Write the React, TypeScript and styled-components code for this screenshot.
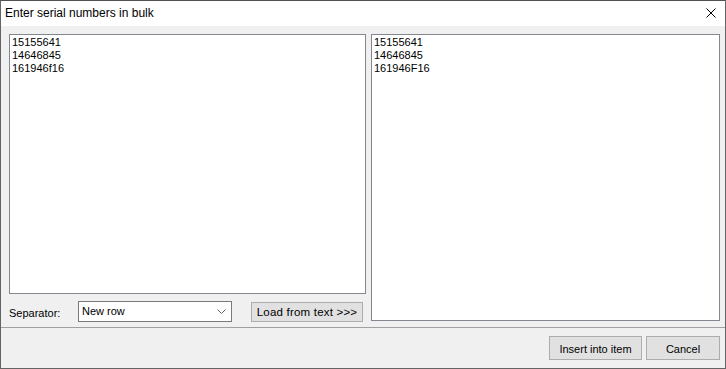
import styled, { createGlobalStyle } from "styled-components";

const GlobalStyle = createGlobalStyle`
  html, body {
    margin: 0;
    padding: 0;
    background: #ffffff;
  }
  body {
    font-family: "Liberation Sans", Arial, sans-serif;
    font-size: 11px;
    color: #000;
  }
`;

const leftSerials = "15155641\n14646845\n161946f16";
const rightSerials = "15155641\n14646845\n161946F16";

const App = () => {
  return (
    <>
      <GlobalStyle />
      <Window>
        <TitleBar>
          <Title>Enter serial numbers in bulk</Title>
          <CloseButton aria-label="Close">
            <svg width="10" height="10" viewBox="0 0 10 10">
              <path d="M0.5 0.5 L9.5 9.5 M9.5 0.5 L0.5 9.5" stroke="#000" strokeWidth="1" fill="none" />
            </svg>
          </CloseButton>
        </TitleBar>

        <Main>
          <LeftColumn>
            <TextBox $height={260} readOnly value={leftSerials} />
            <SeparatorRow>
              <Label>Separator:</Label>
              <Combo>
                <ComboText>New row</ComboText>
                <svg width="9" height="5" viewBox="0 0 9 5">
                  <path d="M0.5 0.5 L4.5 4.5 L8.5 0.5" stroke="#606060" strokeWidth="1" fill="none" />
                </svg>
              </Combo>
              <LoadButton $width={112} $height={20}>Load from text &gt;&gt;&gt;</LoadButton>
            </SeparatorRow>
          </LeftColumn>
          <TextBox $height={287} readOnly value={rightSerials} />
        </Main>

        <Footer>
          <Button $width={93} $height={24}>Insert into item</Button>
          <Button $width={74} $height={24}>Cancel</Button>
        </Footer>
      </Window>
    </>
  );
};

export default App;

const Window = styled.div`
  width: 726px;
  height: 369px;
  box-sizing: border-box;
  border: 1px solid #646464;
  border-top-color: #505050;
  background: #f0f0f0;
  display: flex;
  flex-direction: column;
`;

const TitleBar = styled.div`
  height: 25px;
  background: #ffffff;
  display: flex;
  align-items: center;
  justify-content: space-between;
  padding: 0 9px 0 4px;
`;

const Title = styled.div`
  font-family: "Liberation Sans", Arial, sans-serif;
  font-size: 12px;
  color: #000;
  padding-bottom: 1px;
`;

const CloseButton = styled.div`
  width: 10px;
  height: 10px;
  display: flex;
  margin-bottom: 2px;

  svg {
    display: block;
  }
`;

const Main = styled.div`
  height: 301px;
  box-sizing: border-box;
  padding: 8px 5px 0 8px;
  display: grid;
  grid-template-columns: 357px 349px;
  column-gap: 5px;
  align-items: start;
`;

const LeftColumn = styled.div`
  display: flex;
  flex-direction: column;
`;

const TextBox = styled.textarea<{ $height: number }>`
  display: block;
  width: 100%;
  height: ${(p) => p.$height}px;
  box-sizing: border-box;
  margin: 0;
  padding: 1px 3px 1px 2px;
  border: 1px solid #828790;
  background: #ffffff;
  font-family: "Liberation Sans", Arial, sans-serif;
  font-size: 11px;
  line-height: 13px;
  color: #000;
  resize: none;
  overflow: hidden;
  outline: none;
`;

const SeparatorRow = styled.div`
  display: flex;
  align-items: center;
  margin-top: 7px;
  height: 21px;
`;

const Label = styled.div`
  width: 69px;
  padding-top: 2px;
`;

const Combo = styled.div`
  width: 154px;
  height: 21px;
  box-sizing: border-box;
  border: 1px solid #7a7a7a;
  background: #ffffff;
  display: flex;
  align-items: center;
  justify-content: space-between;
  padding: 0 5px 0 3px;
  margin-right: 19px;

  svg {
    display: block;
  }
`;

const ComboText = styled.span`
  padding-bottom: 1px;
`;

const Button = styled.div<{ $width: number; $height: number }>`
  width: ${(p) => p.$width}px;
  height: ${(p) => p.$height}px;
  box-sizing: border-box;
  border: 1px solid #adadad;
  background: #e1e1e1;
  display: flex;
  align-items: center;
  justify-content: center;
  font-size: 11px;
  color: #000;
  padding-top: 1px;
`;

const LoadButton = styled(Button)`
  font-size: 11.5px;
  letter-spacing: 0.2px;
`;

const Footer = styled.div`
  flex: 1;
  border-top: 1px solid #a0a0a0;
  display: flex;
  justify-content: flex-end;
  align-items: flex-start;
  gap: 4px;
  padding: 8px 5px 0 0;
`;
